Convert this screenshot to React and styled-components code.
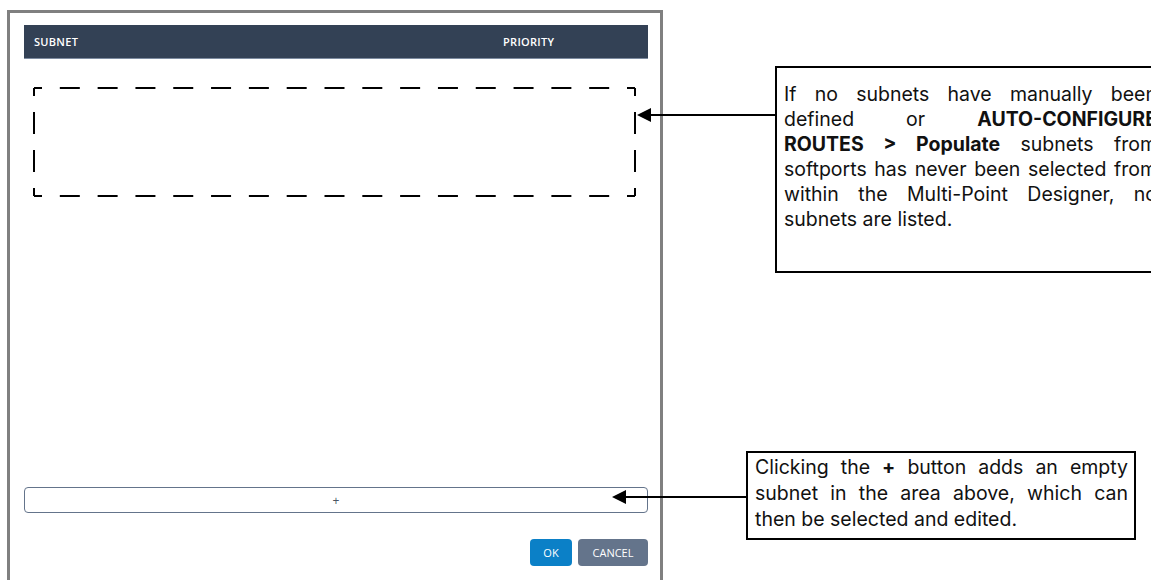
import React from 'react';
import styled, { createGlobalStyle } from 'styled-components';

const GlobalStyle = createGlobalStyle`
    html, body {
        margin: 0;
        padding: 0;
        background: #fff;
        overflow: hidden;
    }
`

const Page = styled.div`
    position: relative;
    width: 1151px;
    height: 580px;
    overflow: hidden;
    background: #fff;
`

const Dialog = styled.div`
    margin: 10px 0 0 7px;
    width: 656px;
    height: 590px;
    border: 3px solid #808080;
    border-bottom: none;
    padding: 12px 12px 0 14px;
    box-sizing: border-box;
    display: flex;
    flex-direction: column;
    font-family: "Open Sans", "Liberation Sans", sans-serif;
`

const Header = styled.div`
    height: 34px;
    background: #334155;
    border-bottom: 1px solid #7d8ba0;
    box-sizing: border-box;
    display: grid;
    grid-template-columns: 469px 1fr;
    align-items: center;
    padding-left: 10px;
    color: #fff;
    font-size: 11px;
    font-weight: 600;
    letter-spacing: 0.3px;
`

const ListArea = styled.div`
    height: 428px;
    padding: 28px 0 0 9px;
    box-sizing: border-box;
`

const AddButton = styled.div`
    height: 26px;
    border: 1.5px solid #64748b;
    border-radius: 4px;
    box-sizing: border-box;
    display: flex;
    align-items: center;
    justify-content: center;
    color: #4b5563;
    font-size: 12px;
`

const Footer = styled.div`
    display: flex;
    justify-content: flex-end;
    gap: 6px;
    margin-top: 26px;
`

const Button = styled.div`
    height: 27px;
    width: ${p => p.$w}px;
    border-radius: 4px;
    background: ${p => p.$bg};
    color: #fff;
    font-size: 11px;
    font-weight: 500;
    display: flex;
    align-items: center;
    justify-content: center;
`

const Callout = styled.div`
    position: absolute;
    left: ${p => p.$x}px;
    top: ${p => p.$y}px;
    width: ${p => p.$w}px;
    height: ${p => p.$h}px;
    border: 2px solid #000;
    box-sizing: border-box;
    padding: ${p => p.$pt}px 0 0 7px;
    font-family: Inter, "Liberation Sans", sans-serif;
    font-size: 19.5px;
    color: #111;
    background: #fff;
`

const Line = styled.div`
    width: 373px;
    line-height: ${p => p.$lh}px;
    white-space: nowrap;
    text-align: justify;
    text-align-last: ${p => (p.$last ? 'left' : 'justify')};
`

const Overlay = styled.svg`
    position: absolute;
    left: 0;
    top: 0;
    pointer-events: none;
`

// builds the dashes of one side: a short corner piece at each end, evenly spaced dashes between
function sideDashes(x1, y1, x2, y2, dash, corner) {
    const len = Math.hypot(x2 - x1, y2 - y1);
    const ux = (x2 - x1) / len;
    const uy = (y2 - y1) / len;
    const inner = len - corner * 2;
    const n = Math.max(0, Math.round((inner - 17) / (dash + 17)));
    const gap = (inner - n * dash) / (n + 1);
    const segs = [[0, corner]];
    let pos = corner + gap;
    for (let i = 0; i < n; i++) {
        segs.push([pos, pos + dash]);
        pos += dash + gap;
    }
    segs.push([len - corner, len]);
    return segs.map(([a, b]) => [x1 + ux * a, y1 + uy * a, x1 + ux * b, y1 + uy * b]);
}

const DashedBox = ({ w, h }) => {
    const s = 1;
    const segs = [
        ...sideDashes(s, s, w - s, s, 20, 8),
        ...sideDashes(s, h - s, w - s, h - s, 20, 8),
        ...sideDashes(s, s, s, h - s, 22, 8),
        ...sideDashes(w - s, s, w - s, h - s, 22, 8),
    ];
    return (
        <svg width={w} height={h} style={{ display: 'block' }}>
            {segs.map((d, i) => (
                <line key={i} x1={d[0]} y1={d[1]} x2={d[2]} y2={d[3]} stroke="#000" strokeWidth="2" />
            ))}
        </svg>
    );
};

const Arrow = ({ from, to, y }) => (
    <g>
        <line x1={from} y1={y} x2={to + 12} y2={y} stroke="#000" strokeWidth="2" />
        <polygon points={`${to},${y} ${to + 14},${y - 7} ${to + 14},${y + 7}`} fill="#000" />
    </g>
);

const App = () => {
    return (
        <Page>
            <GlobalStyle />
            <Dialog>
                <Header>
                    <span>SUBNET</span>
                    <span>PRIORITY</span>
                </Header>
                <ListArea>
                    <DashedBox w={603} h={110} />
                </ListArea>
                <AddButton>+</AddButton>
                <Footer>
                    <Button $w={42} $bg="#0b80c7">OK</Button>
                    <Button $w={70} $bg="#64748b">CANCEL</Button>
                </Footer>
            </Dialog>

            <Callout $x={775} $y={66} $w={400} $h={207} $pt={14}>
                <Line $lh={25}>If no subnets have manually been</Line>
                <Line $lh={25}>defined or <b>AUTO-CONFIGURE</b></Line>
                <Line $lh={25}><b>ROUTES &gt; Populate</b> subnets from</Line>
                <Line $lh={25}>softports has never been selected from</Line>
                <Line $lh={25}>within the Multi-Point Designer, no</Line>
                <Line $lh={25} $last>subnets are listed.</Line>
            </Callout>

            <Callout $x={746} $y={451} $w={390} $h={89} $pt={1}>
                <Line $lh={26}>Clicking the <b>+</b> button adds an empty</Line>
                <Line $lh={26}>subnet in the area above, which can</Line>
                <Line $lh={26} $last>then be selected and edited.</Line>
            </Callout>

            <Overlay width="1151" height="580">
                <Arrow from={776} to={637} y={115} />
                <Arrow from={747} to={612} y={497} />
            </Overlay>
        </Page>
    );
};

export default App;
